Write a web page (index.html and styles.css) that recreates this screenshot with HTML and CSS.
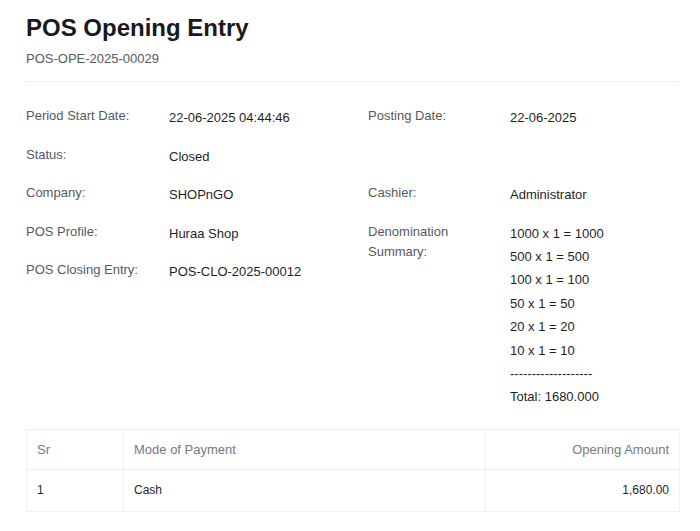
FILE: index.html
```html
<!DOCTYPE html>
<html>
<head>
<meta charset="utf-8">
<link rel="stylesheet" href="styles.css">
</head>
<body>
<div class="page">
  <h1 class="title">POS Opening Entry</h1>
  <div class="subtitle">POS-OPE-2025-00029</div>
  <hr class="divider">
  <div class="details">
    <div class="col">
      <div class="field"><div class="label">Period Start Date:</div><div class="value">22-06-2025 04:44:46</div></div>
      <div class="field"><div class="label">Status:</div><div class="value">Closed</div></div>
      <div class="field"><div class="label">Company:</div><div class="value">SHOPnGO</div></div>
      <div class="field"><div class="label">POS Profile:</div><div class="value">Huraa Shop</div></div>
      <div class="field"><div class="label">POS Closing Entry:</div><div class="value">POS-CLO-2025-00012</div></div>
    </div>
    <div class="col col-right">
      <div class="field"><div class="label">Posting Date:</div><div class="value">22-06-2025</div></div>
      <div class="field"><div class="label">&nbsp;</div><div class="value">&nbsp;</div></div>
      <div class="field"><div class="label">Cashier:</div><div class="value">Administrator</div></div>
      <div class="field"><div class="label">Denomination Summary:</div>
        <div class="value">
          <div>1000 x 1 = 1000</div>
          <div>500 x 1 = 500</div>
          <div>100 x 1 = 100</div>
          <div>50 x 1 = 50</div>
          <div>20 x 1 = 20</div>
          <div>10 x 1 = 10</div>
          <div>-------------------</div>
          <div>Total: 1680.000</div>
        </div>
      </div>
    </div>
  </div>
  <table class="payments">
    <colgroup><col class="c-sr"><col class="c-mode"><col class="c-amt"></colgroup>
    <thead>
      <tr><th>Sr</th><th>Mode of Payment</th><th class="right">Opening Amount</th></tr>
    </thead>
    <tbody>
      <tr><td>1</td><td>Cash</td><td class="right">1,680.00</td></tr>
    </tbody>
  </table>
</div>
</body>
</html>
```
FILE: styles.css
```css
html, body {
  margin: 0;
  padding: 0;
  background: #ffffff;
}
body {
  font-family: "Liberation Sans", Arial, sans-serif;
  color: #1f1f1f;
}
.page {
  width: 653px;
  margin-left: 26px;
  padding-top: 14px;
}
.title {
  margin: 0;
  font-size: 24px;
  line-height: 28.8px;
  font-weight: bold;
  color: #1a1a1a;
}
.subtitle {
  margin-top: 6.5px;
  font-size: 13px;
  line-height: 19.5px;
  color: #555a60;
}
.divider {
  margin: 12.5px 0 0 0;
  border: 0;
  border-top: 1px solid #efefef;
  height: 0;
}
.details {
  display: grid;
  grid-template-columns: 342px 1fr;
  margin-top: 24px;
}
.col {
  display: flex;
  flex-direction: column;
  gap: 15px;
}
.field {
  display: grid;
  grid-template-columns: 143px 1fr;
  font-size: 13px;
}
.col-right .field {
  grid-template-columns: 142px 1fr;
}
.label {
  line-height: 20.8px;
  color: #555a62;
  padding-right: 12px;
}
.value {
  line-height: 23.4px;
  color: #1f1f1f;
}
.payments {
  width: 653px;
  margin-top: 20px;
  border-collapse: collapse;
  table-layout: fixed;
  font-size: 12px;
}
.c-sr { width: 97px; }
.c-mode { width: 362px; }
.c-amt { width: 194px; }
.payments th,
.payments td {
  border: 1px solid #efefef;
  padding: 11px 10px;
  line-height: 17px;
  text-align: left;
}
.payments th {
  font-weight: normal;
  color: #737a84;
  font-size: 13px;
}
.payments td {
  padding: 12px 10px;
  color: #1f1f1f;
}
.payments .right {
  text-align: right;
}
```
